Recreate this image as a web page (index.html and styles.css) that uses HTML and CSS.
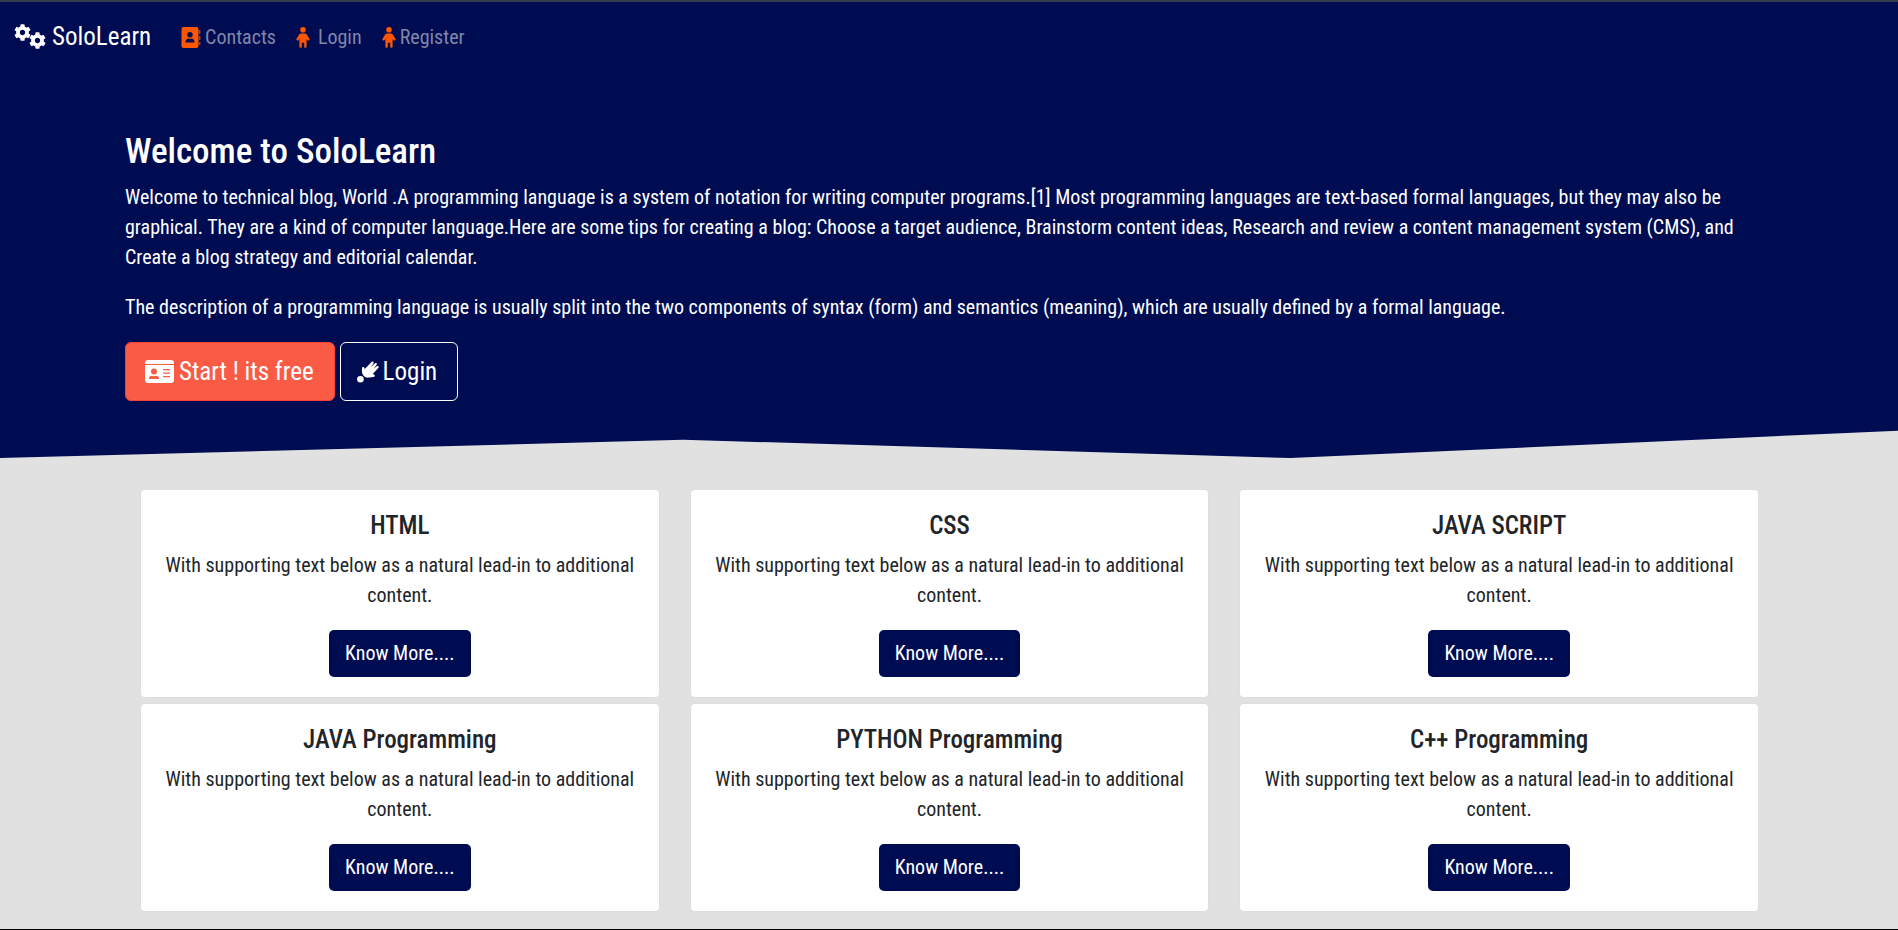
FILE: index.html
```html
<!DOCTYPE html>
<html lang="en">
<head>
<meta charset="utf-8">
<title>SoloLearn</title>
<link rel="stylesheet" href="styles.css">
</head>
<body>
<svg class="sprite" aria-hidden="true">
  <symbol id="gear" viewBox="0 0 512 512"><path d="M487.4 315.7l-42.600-24.600c4.300-23.200 4.300-47 0-70.200l42.600-24.600c4.900-2.800 7.100-8.600 5.500-14-11.100-35.600-30-67.800-54.700-94.600-3.800-4.100-10-5.100-14.800-2.300L380.800 110c-17.900-15.400-38.500-27.300-60.800-35.100V25.800c0-5.600-3.900-10.500-9.400-11.700-36.700-8.200-74.300-7.800-109.200 0-5.500 1.200-9.400 6.100-9.400 11.700V75c-22.200 7.900-42.800 19.800-60.800 35.100L88.700 85.500c-4.900-2.800-11-1.900-14.800 2.300-24.700 26.700-43.600 58.900-54.700 94.600-1.700 5.400.6 11.200 5.500 14L67.300 221c-4.300 23.200-4.300 47 0 70.200l-42.600 24.600c-4.900 2.800-7.100 8.600-5.500 14 11.100 35.600 30 67.800 54.700 94.600 3.800 4.100 10 5.100 14.800 2.300l42.600-24.600c17.900 15.400 38.500 27.300 60.800 35.100v49.200c0 5.600 3.900 10.500 9.400 11.700 36.700 8.200 74.300 7.800 109.200 0 5.500-1.200 9.400-6.100 9.400-11.700v-49.200c22.200-7.900 42.800-19.800 60.800-35.100l42.600 24.600c4.900 2.800 11 1.900 14.800-2.300 24.700-26.700 43.600-58.900 54.700-94.600 1.500-5.500-.7-11.300-5.600-14.100zM256 336c-44.100 0-80-35.900-80-80s35.900-80 80-80 80 35.900 80 80-35.900 80-80 80z"/></symbol>
  <symbol id="child" viewBox="0 0 14 21"><circle cx="7" cy="2.800" r="2.800"/><path d="M5.400 6.400h3.200c1 0 1.700.4 2.200 1.200l2.600 4.200c.8 1.300-1.100 2.500-2 1.200L10.600 12v7.800c0 1.400-2.400 1.400-2.400 0V15.800H5.800v4c0 1.400-2.400 1.400-2.400 0V12l-.8 1c-.9 1.300-2.800.1-2-1.200l2.600-4.200c.5-.8 1.200-1.200 2.200-1.200z"/></symbol>
</svg>
<div class="hero">
  <nav class="nav">
    <a class="brand" href="#"><svg class="cogs" viewBox="0 0 32 26" aria-hidden="true"><use href="#gear" x="0" y="0" width="17" height="17"/><use href="#gear" x="15" y="8" width="17" height="17"/></svg>SoloLearn</a>
    <a class="link" href="#"><svg class="book" viewBox="0 0 20 21" aria-hidden="true"><path fill-rule="evenodd" d="M2.500 0h13a2 2 0 0 1 2 2v17a2 2 0 0 1-2 2h-13a2 2 0 0 1-2-2V2a2 2 0 0 1 2-2zM9 5a2.700 2.700 0 1 0 0 5.400A2.700 2.700 0 0 0 9 5zM4.500 15.500h9c0-2.700-1.500-4-3-4-1 .4-2 .4-3 0-1.500 0-3 1.300-3 4zM18.300 3h1v4h-1zM18.300 9h1v4h-1zM18.300 15h1v3h-1z"/></svg>Contacts</a>
    <a class="link spaced" href="#"><svg class="child" aria-hidden="true"><use href="#child"/></svg>Login</a>
    <a class="link" href="#"><svg class="child" aria-hidden="true"><use href="#child"/></svg>Register</a>
  </nav>
  <header class="intro">
    <h1>Welcome to SoloLearn</h1>
    <p>Welcome to technical blog, World .A programming language is a system of notation for writing computer programs.[1] Most programming languages are text-based formal languages, but they may also be graphical. They are a kind of computer language.Here are some tips for creating a blog: Choose a target audience, Brainstorm content ideas, Research and review a content management system (CMS), and Create a blog strategy and editorial calendar.</p>
    <p>The description of a programming language is usually split into the two components of syntax (form) and semantics (meaning), which are usually defined by a formal language.</p>
    <div class="actions">
      <button class="btn start" type="button"><svg class="card-icon" viewBox="0 0 29 23" aria-hidden="true"><path fill-rule="evenodd" d="M3 0h23a3 3 0 0 1 3 3v1H0V3a3 3 0 0 1 3-3zM0 5h29v15a3 3 0 0 1-3 3H3a3 3 0 0 1-3-3zM9 8.500a3 3 0 1 0 0 6 3 3 0 0 0 0-6zM4 19h10c0-2-1-3.200-3-3.200-1.300.5-2.700.5-4 0-2 0-3 1.200-3 3.200zM18 9h7v1.300h-7zM18 12.500h7v1.300h-7zM18 16h7v1.300h-7z"/></svg>Start ! its free</button>
      <button class="btn login" type="button"><svg class="comet" viewBox="0 0 22 22" aria-hidden="true"><circle cx="3.400" cy="18.200" r="3.300"/><path d="M5 6.500c.8-1 2-.6 2.400.3l.4 1.200L14.500 1c1.200-1.200 2.800 0 1.900 1.400L14 6l3.800-3.600c1.300-1.100 2.700.2 1.700 1.500L16.500 7.500l3.300-2.300c1.400-.9 2.500.6 1.500 1.700l-5.600 6 1.300.6c1.100.6 1 2.200-.2 2.500l-5 .6c-2 .2-3.600-.3-4.900-1.600-1.500-1.500-2-3.200-2-5z"/></svg>Login</button>
    </div>
  </header>
</div>
<main class="grid">
  <section class="card"><h2>HTML</h2><p>With supporting text below as a natural lead-in to additional content.</p><a class="more" href="#">Know More....</a></section>
  <section class="card"><h2>CSS</h2><p>With supporting text below as a natural lead-in to additional content.</p><a class="more" href="#">Know More....</a></section>
  <section class="card"><h2>JAVA SCRIPT</h2><p>With supporting text below as a natural lead-in to additional content.</p><a class="more" href="#">Know More....</a></section>
  <section class="card"><h2>JAVA Programming</h2><p>With supporting text below as a natural lead-in to additional content.</p><a class="more" href="#">Know More....</a></section>
  <section class="card"><h2>PYTHON Programming</h2><p>With supporting text below as a natural lead-in to additional content.</p><a class="more" href="#">Know More....</a></section>
  <section class="card"><h2>C++ Programming</h2><p>With supporting text below as a natural lead-in to additional content.</p><a class="more" href="#">Know More....</a></section>
</main>
</body>
</html>
```
FILE: styles.css
```css
* { box-sizing: border-box; }
body {
  margin: 0;
  border-top: 2px solid #343e4a;
  border-bottom: 1px solid #000;
  background: #e1e1e1;
  color: #212529;
  font: 400 20px/30px "Roboto Condensed", Roboto, sans-serif;
}
h1, h2, p { margin: 0; }
a { text-decoration: none; }
svg { fill: currentColor; flex: none; }
.sprite { display: none; }
.hero {
  background: #000c52;
  color: #fff;
  padding-bottom: 57px;
  clip-path: polygon(0 0, 100% 0, 100% 94%, 68% 100%, 36% 96%, 0 100%);
}
.nav {
  display: flex;
  align-items: center;
  gap: 20px;
  height: 70px;
  padding: 0 14px;
}
.brand, .link { display: flex; align-items: center; gap: 4px; }
.brand { gap: 6px; margin-right: 10px; color: #fff; font-size: 25px; }
.link { color: #8086a8; }
.link svg { color: #ff5700; }
.spaced { gap: 8px; }
.cogs { width: 32px; height: 26px; }
.book { width: 20px; height: 21px; }
.child { width: 14px; height: 21px; }
.intro { padding: 59px 125px 0; }
h1 { font-size: 35px; line-height: 42px; font-weight: 500; margin-bottom: 9px; }
.intro p { margin-bottom: 20px; }
.actions { display: flex; gap: 5px; }
.btn {
  display: flex;
  align-items: center;
  gap: 5px;
  height: 59px;
  border: 1px solid #fff;
  border-radius: 6px;
  background: transparent;
  color: #fff;
  font: inherit;
  font-size: 25px;
  padding: 0 20px;
}
.start { background: #fa5b45; border-color: #f44336; padding: 0 20px 0 19px; }
.login { padding: 0 20px 0 16px; gap: 4px; }
.card-icon { width: 29px; height: 23px; }
.comet { width: 22px; height: 22px; }
.grid {
  display: grid;
  grid-template-columns: repeat(3, 1fr);
  gap: 7px 32px;
  padding: 32px 140px 18px 141px;
}
.card {
  display: flex;
  flex-direction: column;
  align-items: center;
  padding: 20px;
  border-radius: 4px;
  background: #fff;
  box-shadow: 0 0 0 1px #dedede;
  text-align: center;
}
h2 { font-size: 25px; line-height: 32px; font-weight: 500; margin-bottom: 8px; }
.card p { margin-bottom: 20px; }
.more {
  padding: 8px 16px;
  border-radius: 5px;
  background: #000c52;
  color: #fff;
  line-height: 31px;
}
```
